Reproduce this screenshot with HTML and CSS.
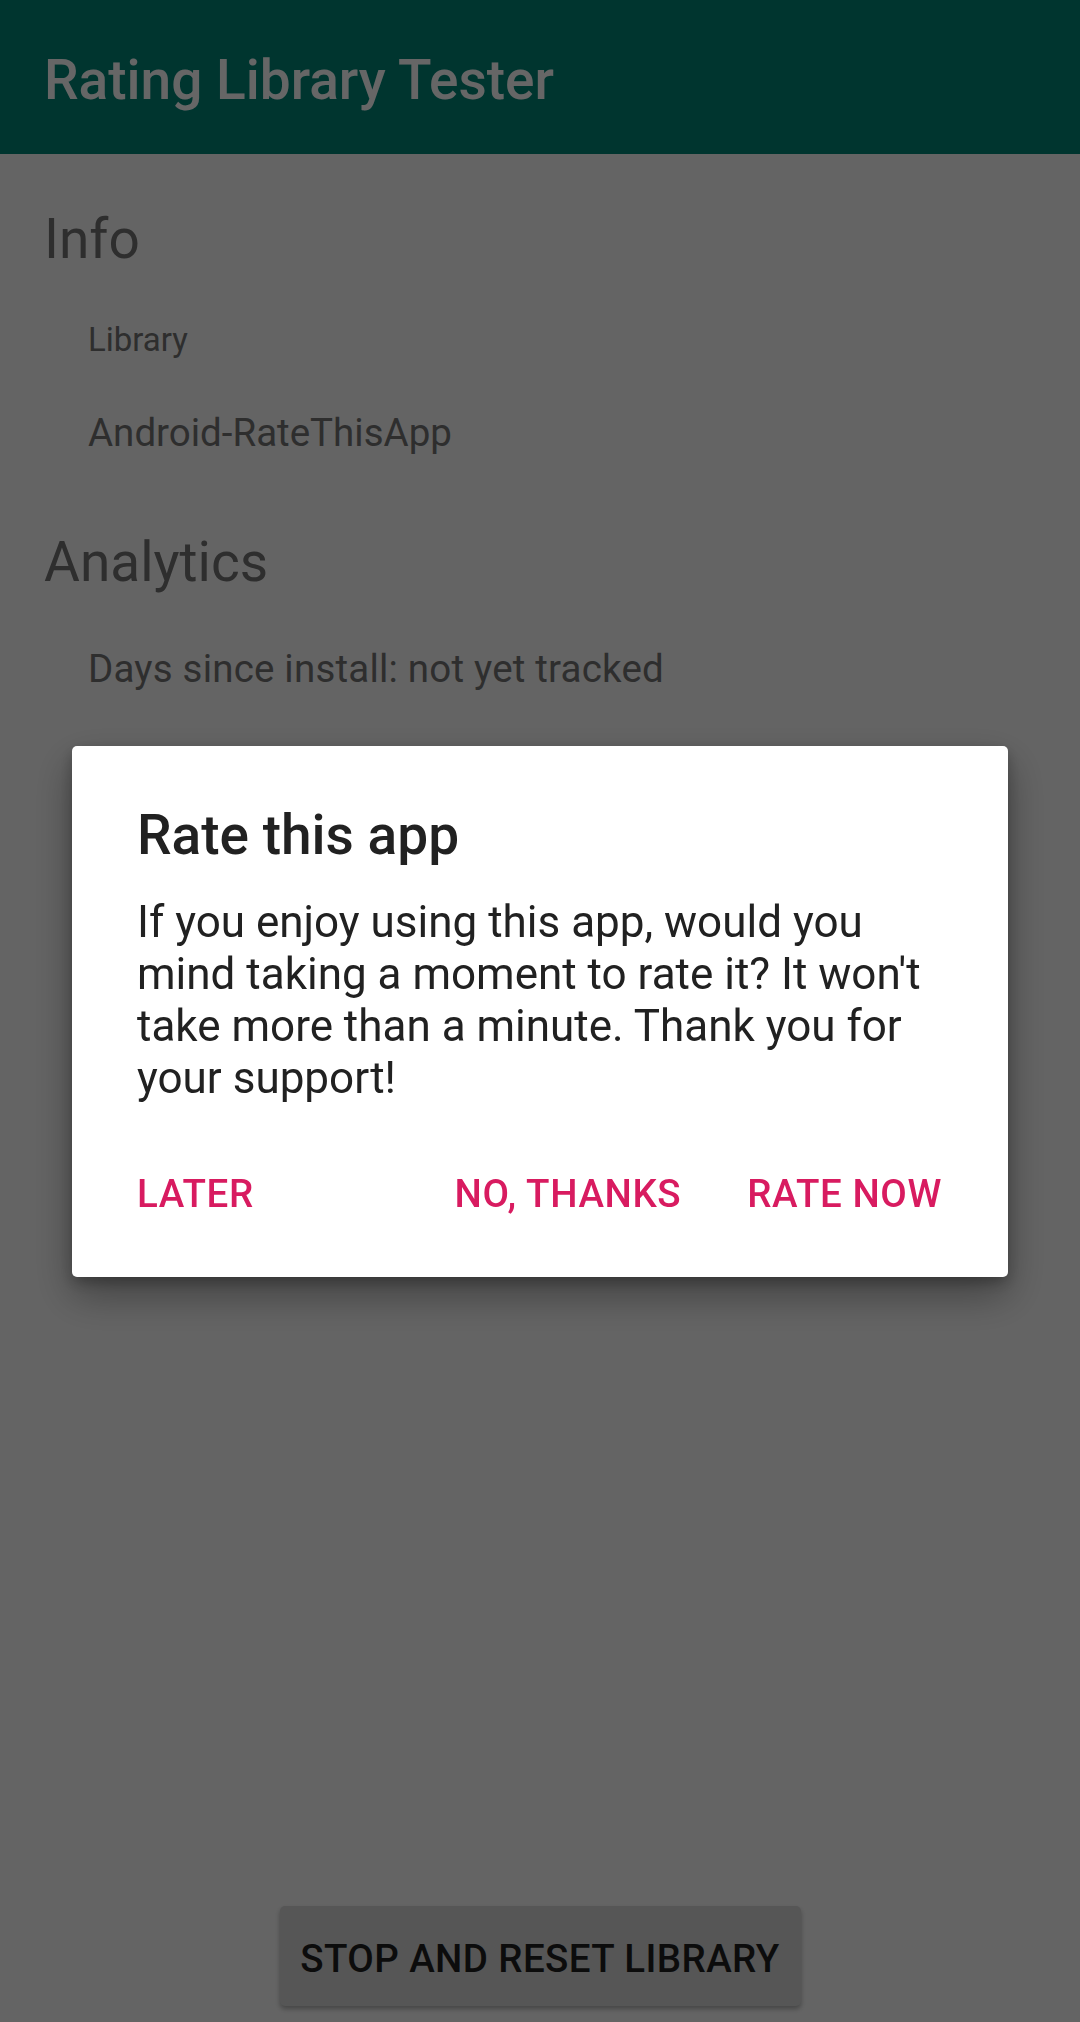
FILE: index.html
```html
<!DOCTYPE html>
<html lang="en">
<head>
<meta charset="utf-8">
<title>Rating Library Tester</title>
<link rel="stylesheet" href="styles.css">
</head>
<body>
<div class="screen">
  <header class="toolbar">
    <h1 class="toolbar-title">Rating Library Tester</h1>
  </header>
  <main class="content">
    <h2 class="section-title info-title">Info</h2>
    <div class="label">Library</div>
    <div class="value">Android-RateThisApp</div>
    <h2 class="section-title analytics-title">Analytics</h2>
    <div class="value days">Days since install: not yet tracked</div>
  </main>
  <div class="bottom-bar">
    <button class="raised-btn" type="button">STOP AND RESET LIBRARY</button>
  </div>
</div>
<div class="scrim">
  <div class="dialog" role="dialog">
    <h3 class="dialog-title">Rate this app</h3>
    <p class="dialog-message">If you enjoy using this app, would you mind taking a moment to rate it? It won't take more than a minute. Thank you for your support!</p>
    <div class="dialog-actions">
      <span class="action">LATER</span>
      <span class="spacer"></span>
      <span class="action">NO, THANKS</span>
      <span class="action action-positive">RATE NOW</span>
    </div>
  </div>
</div>
</body>
</html>
```
FILE: styles.css
```css
html, body {
  margin: 0;
  padding: 0;
}
body {
  font-family: Roboto, "Noto Sans", "Liberation Sans", sans-serif;
  background: #fafafa;
  width: 1080px;
  height: 2022px;
  overflow: hidden;
}
.screen {
  display: flex;
  flex-direction: column;
  height: 2022px;
}
.toolbar {
  height: 154px;
  background: #008577;
  box-sizing: border-box;
  padding: 48px 0 0 44px;
}
.toolbar-title {
  margin: 0;
  font-size: 55px;
  line-height: 64px;
  font-weight: 500;
  color: #ffffff;
}
.content {
  padding: 52px 44px 0 44px;
  display: flex;
  flex-direction: column;
  color: #737373;
}
.section-title {
  margin: 0;
  font-size: 55px;
  line-height: 66px;
  font-weight: 400;
}
.label {
  margin: 48px 0 0 44px;
  font-size: 33px;
  line-height: 40px;
}
.value {
  margin: 50px 0 0 44px;
  font-size: 38.5px;
  line-height: 46px;
}
.value.days {
  margin-top: 51px;
  letter-spacing: 0.2px;
}
.analytics-title {
  margin-top: 73px;
}
.bottom-bar {
  margin-top: auto;
  padding-bottom: 16px;
  display: flex;
  justify-content: center;
}
.raised-btn {
  height: 100px;
  width: 521px;
  border: none;
  border-radius: 5px;
  background: #d6d7d7;
  color: #1e1e1e;
  font-family: Roboto, "Noto Sans", "Liberation Sans", sans-serif;
  font-size: 38.5px;
  font-weight: 500;
  letter-spacing: 0.4px;
  padding: 4px 0 0 0;
  box-shadow: 0 3px 5px rgba(0, 0, 0, 0.3);
}
.scrim {
  position: fixed;
  inset: 0;
  background: rgba(0, 0, 0, 0.6);
  display: flex;
  align-items: center;
  justify-content: center;
}
.dialog {
  width: 936px;
  height: 531px;
  box-sizing: border-box;
  background: #ffffff;
  border-radius: 5px;
  padding: 57px 66px 0 65px;
  box-shadow: 0 18px 40px rgba(0, 0, 0, 0.35), 0 6px 14px rgba(0, 0, 0, 0.25);
  display: flex;
  flex-direction: column;
}
.dialog-title {
  margin: 0;
  font-size: 55px;
  line-height: 64px;
  font-weight: 500;
  color: #212121;
}
.dialog-message {
  margin: 29px 0 0 0;
  font-size: 44px;
  line-height: 52px;
  color: #212121;
}
.dialog-actions {
  margin-top: 67px;
  display: flex;
  align-items: center;
}
.action {
  font-size: 38.5px;
  line-height: 46px;
  font-weight: 500;
  letter-spacing: 0.6px;
  color: #d81b60;
}
.spacer {
  flex: 1;
}
.action-positive {
  margin-left: 66px;
}
```
